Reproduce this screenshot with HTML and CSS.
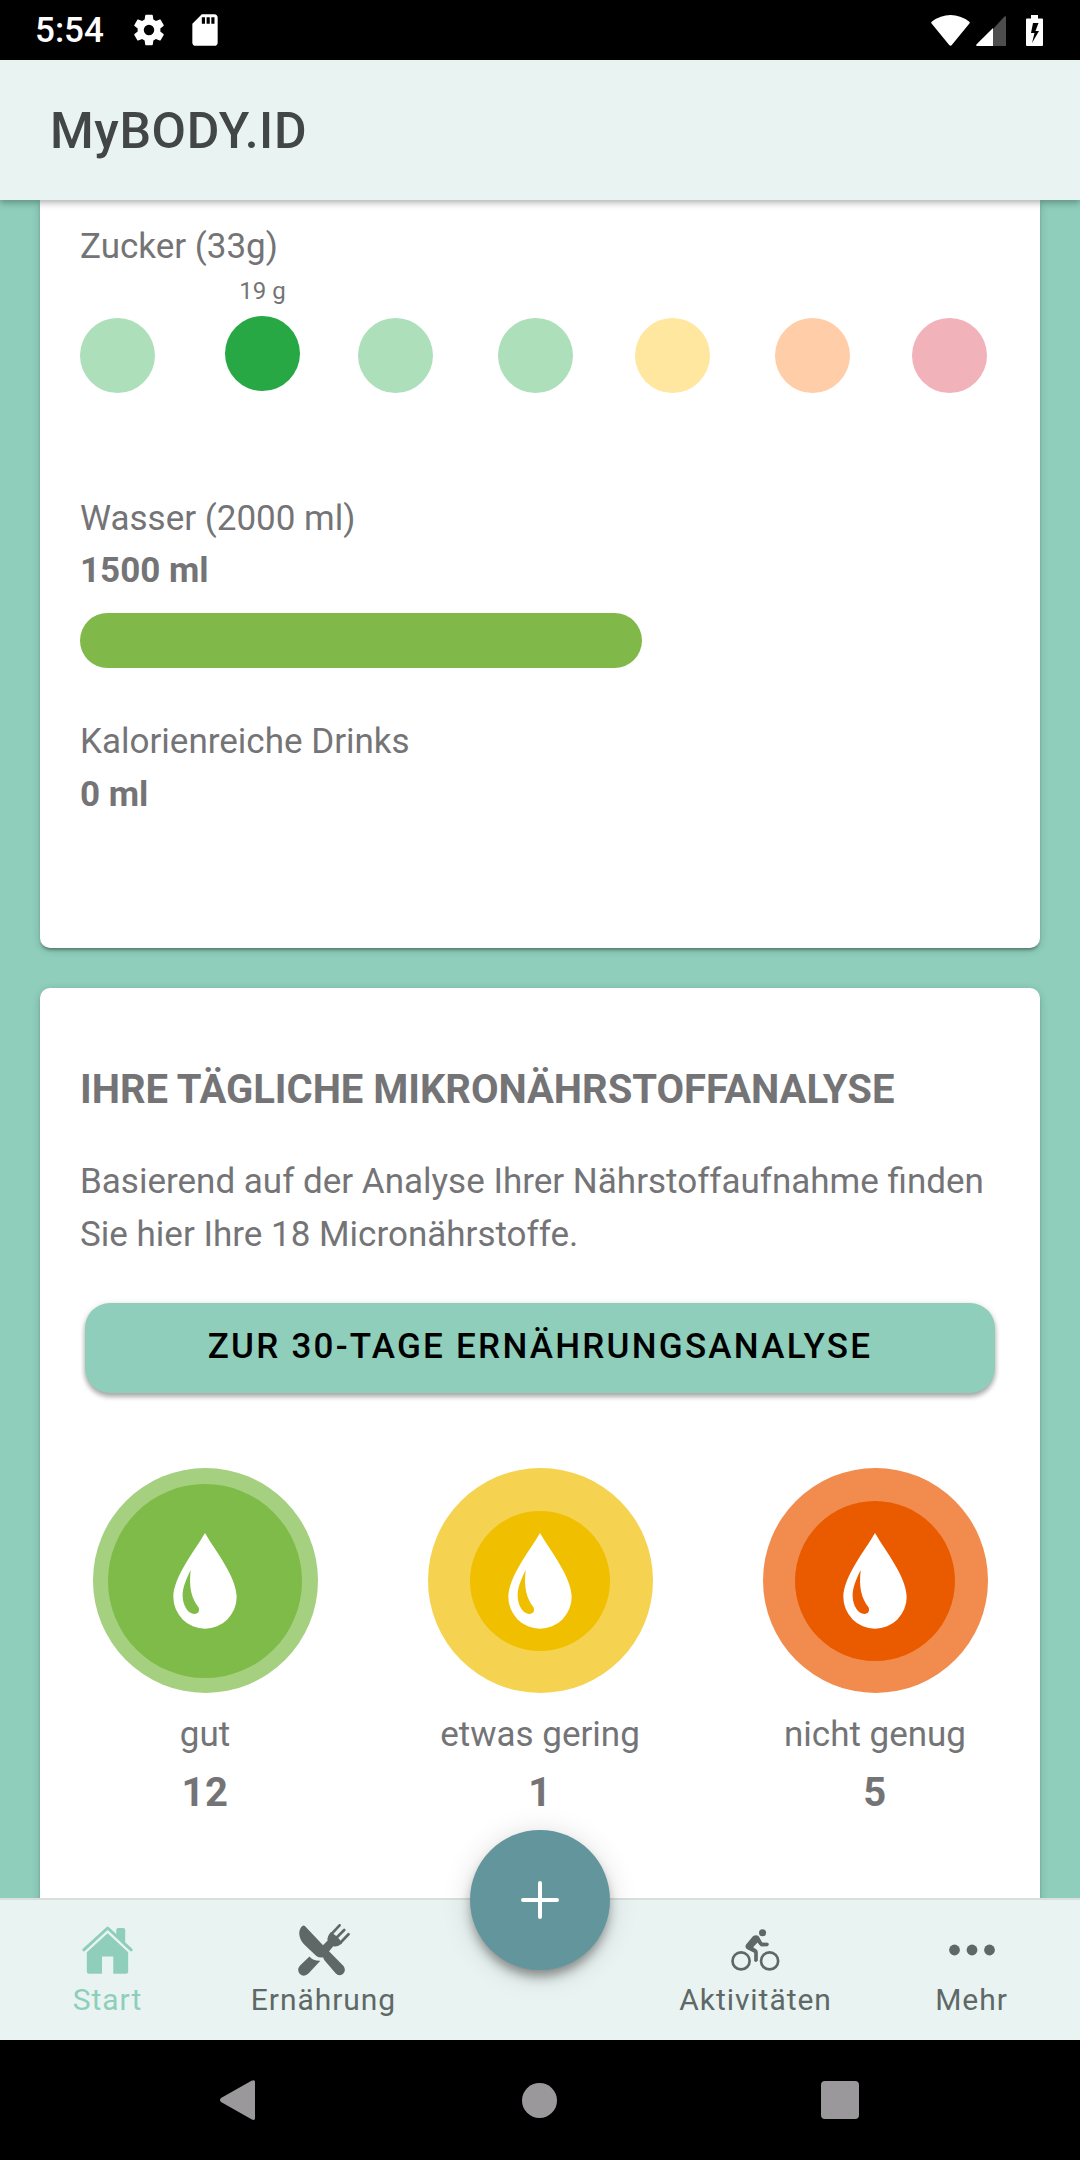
FILE: index.html
```html
<!DOCTYPE html>
<html lang="de">
<head>
    <meta charset="UTF-8">
    <meta name="viewport" content="width=device-width, initial-scale=1.0">
    <title>MyBODY.ID</title>
    <link rel="stylesheet" href="styles.css">
</head>
<body>
    <svg class="sprite" aria-hidden="true">
        <symbol id="drop" viewBox="0 0 190 288">
            <path fill-rule="evenodd" d="M95 0C125 52 190 132 190 192A95 95 0 0 1 0 192C0 132 65 52 95 0ZM52 111C38 140 27 165 28 190C29 220 45 243 63 243C76 243 80 232 75 222C55 196 46 165 52 111Z"/>
        </symbol>
    </svg>

    <div class="status-bar">
        <span class="time">5:54</span>
        <svg class="icon-gear" viewBox="0 0 24 24"><path d="M19.14 12.94c.04-.3.06-.61.06-.94 0-.32-.02-.64-.07-.94l2.03-1.58c.18-.14.23-.41.12-.61l-1.92-3.32c-.12-.22-.37-.29-.59-.22l-2.39.96c-.5-.38-1.03-.7-1.62-.94l-.36-2.54c-.04-.24-.24-.41-.48-.41h-3.84c-.24 0-.43.17-.47.41l-.36 2.54c-.59.24-1.13.57-1.62.94l-2.39-.96c-.22-.08-.47 0-.59.22L2.74 8.87c-.12.21-.08.47.12.61l2.03 1.58c-.05.3-.09.63-.09.94s.02.64.07.94l-2.03 1.58c-.18.14-.23.41-.12.61l1.92 3.32c.12.22.37.29.59.22l2.39-.96c.5.38 1.03.7 1.62.94l.36 2.54c.05.24.24.41.48.41h3.84c.24 0 .44-.17.47-.41l.36-2.54c.59-.24 1.13-.56 1.62-.94l2.39.96c.22.08.47 0 .59-.22l1.92-3.32c.12-.22.07-.47-.12-.61l-2.01-1.58zM12 15.3a3.3 3.3 0 1 1 0-6.600 3.300 3.300 0 0 1 0 6.600z"/></svg>
        <svg class="icon-sd" viewBox="0 0 24 24"><path d="M18 2h-8L4.02 8 4 20c0 1.1.9 2 2 2h12c1.1 0 2-.9 2-2V4c0-1.1-.9-2-2-2zm-6 6h-2V4h2v4zm3 0h-2V4h2v4zm3 0h-2V4h2v4z"/></svg>
        <div class="status-right">
            <svg class="icon-wifi" viewBox="0 0 39 31"><path d="M.6 8.6Q-.3 7.4 1 6.5Q9.500 0 19.500 0T38 6.500Q39.300 7.400 38.400 8.600L21 29.800Q19.500 31.500 18 29.800Z"/></svg>
            <svg class="icon-signal" viewBox="0 0 30 30"><path opacity=".3" d="M30 1V30H17V13L28.500 .5Q30 0 30 1Z"/><path d="M17 12V30H1Q-.4 29.500 .6 28.200Z"/></svg>
            <svg class="icon-battery" viewBox="0 0 17 31"><path fill-rule="evenodd" d="M5 0H12V3.500H16Q17 3.500 17 4.500V30Q17 31 16 31H1Q0 31 0 30V4.500Q0 3.500 1 3.500H5ZM7 8L5 18H8.500L6 28L13 16H9.500L12.500 8Z"/></svg>
        </div>
    </div>

    <header class="toolbar">
        <h1>MyBODY.ID</h1>
    </header>

    <main>
        <section class="card card-intake">
            <p>Zucker (33g)</p>
            <div class="dots">
                <div class="dot green"></div>
                <div class="dot-active">
                    <span>19 g</span>
                    <div class="dot"></div>
                </div>
                <div class="dot green"></div>
                <div class="dot green"></div>
                <div class="dot yellow"></div>
                <div class="dot orange"></div>
                <div class="dot red"></div>
            </div>
            <p>Wasser (2000 ml)</p>
            <p><b>1500 ml</b></p>
            <div class="bar"></div>
            <p>Kalorienreiche Drinks</p>
            <p><b>0 ml</b></p>
        </section>

        <section class="card card-micro">
            <h2>IHRE TÄGLICHE MIKRONÄHRSTOFFANALYSE</h2>
            <p class="text">Basierend auf der Analyse Ihrer Nährstoffaufnahme finden Sie hier Ihre 18 Micronährstoffe.</p>
            <button class="btn-analysis">ZUR 30-TAGE ERNÄHRUNGSANALYSE</button>
            <div class="rings">
                <div class="ring-item">
                    <div class="ring ring-good"><div class="core"><svg><use href="#drop"/></svg></div></div>
                    <span>gut</span>
                    <b>12</b>
                </div>
                <div class="ring-item">
                    <div class="ring ring-low"><div class="core"><svg><use href="#drop"/></svg></div></div>
                    <span>etwas gering</span>
                    <b>1</b>
                </div>
                <div class="ring-item">
                    <div class="ring ring-bad"><div class="core"><svg><use href="#drop"/></svg></div></div>
                    <span>nicht genug</span>
                    <b>5</b>
                </div>
            </div>
        </section>
    </main>

    <nav class="tabs">
        <a class="tab active">
            <svg class="icon-home" viewBox="0 0 153 145">
                <path d="M77 22L139 79V138Q139 144 132 144H94V92H60V144H21Q14 144 14 138V79Z"/>
                <path d="M103 12Q103 6 109 6H124Q130 6 130 12V52L103 27Z"/>
                <path class="line" stroke-width="9" d="M5 72L77 6L148 72"/>
            </svg>
            <span>Start</span>
        </a>
        <a class="tab">
            <svg class="icon-food" viewBox="0 0 156 157">
                <path d="M14 5C3 12 0 30 7 45C13 60 36 78 56 97Q63 103 76 101Q76 105 80 110L113 149Q123 160 135 151Q146 141 137 127L73 62L21 7Q17 3 14 5Z"/>
                <path d="M99 24Q86 38 89 50L72 67L91 85L106 67Q120 70 133 57L124 45L113 35Z"/>
                <path class="line" stroke-width="8" d="M101 30L125 4M111 46L139 18M126 58L152 31"/>
                <path d="M34 98Q46 112 67 111L32 149Q18 162 5 151Q-5 138 5 126Z"/>
            </svg>
            <span>Ernährung</span>
        </a>
        <div class="fab-slot">
            <button class="fab" aria-label="+">
                <svg viewBox="0 0 38 38"><path d="M19 2V36M2 19H36"/></svg>
            </button>
        </div>
        <a class="tab">
            <svg class="icon-bike" viewBox="0 0 146 125">
                <circle class="line" stroke-width="8" cx="30" cy="95" r="25.500"/>
                <circle class="line" stroke-width="8" cx="115" cy="95" r="25.500"/>
                <circle cx="94" cy="11" r="10.500"/>
                <path d="M66 21Q76 15 83 22L93 40L110 41Q116 46 109 51L90 52Q86 50 79 40L66 54L76 61Q80 64 80 70V94Q75 102 69 95V71L48 60Q40 54 45 46Z"/>
            </svg>
            <span>Aktivitäten</span>
        </a>
        <a class="tab">
            <svg class="icon-more" viewBox="0 0 46 52"><circle cx="5.500" cy="26" r="5.400"/><circle cx="23" cy="26" r="5.400"/><circle cx="40.500" cy="26" r="5.400"/></svg>
            <span>Mehr</span>
        </a>
    </nav>

    <div class="system-nav">
        <svg class="icon-back" viewBox="0 0 35 40"><path d="M1 18L31.500 .8Q35 -1 35 2V38Q35 41 31.500 39.200L1 22Q-1 20 1 18Z"/></svg>
        <div class="home-key"></div>
        <div class="recent-key"></div>
    </div>
</body>
</html>
```
FILE: styles.css
```css
* {
    box-sizing: border-box;
}

body {
    font-family: Roboto, sans-serif;
    font-size: 35px;
    line-height: 52px;
    color: #747477;
    background: #8ecebb;
    margin: 0;
    width: 1080px;
    height: 2160px;
    display: flex;
    flex-direction: column;
    overflow: hidden;
}

h1, h2, p {
    margin: 0;
}

svg {
    display: block;
    fill: currentColor;
}

.sprite {
    position: absolute;
    width: 0;
    height: 0;
}

/* status bar */
.status-bar {
    height: 60px;
    flex: none;
    display: flex;
    align-items: center;
    background: #000;
    color: #fff;
    padding: 0 37px 0 35px;
}

.time {
    width: 95px;
    padding-top: 2px;
    font-weight: 500;
}

.icon-gear, .icon-sd {
    width: 38px;
    height: 38px;
}

.icon-sd {
    margin-left: 18px;
}

.status-right {
    display: flex;
    margin-left: auto;
}

.icon-wifi {
    width: 39px;
    height: 31px;
    margin-right: 6px;
}

.icon-signal {
    width: 30px;
    height: 30px;
    margin: 1px 20px 0 0;
}

.icon-battery {
    width: 17px;
    height: 31px;
}

/* toolbar */
.toolbar {
    position: relative;
    z-index: 2;
    height: 140px;
    flex: none;
    display: flex;
    align-items: center;
    padding: 2px 0 0 50px;
    background: #e9f4f2;
    box-shadow: 0 3px 5px rgba(0, 0, 0, 0.2), 0 5px 8px rgba(0, 0, 0, 0.08);
}

.toolbar h1 {
    font-size: 50px;
    font-weight: 500;
    letter-spacing: 0.6px;
    color: #424646;
}

/* cards */
main {
    height: 1698px;
    flex: none;
    padding: 0 40px;
    overflow: hidden;
}

.card {
    background: #fff;
    border-radius: 10px;
    box-shadow: 0 3px 3px -1px rgba(0, 0, 0, 0.32), 0 2px 8px rgba(0, 0, 0, 0.16);
    padding: 0 40px;
}

.card-intake {
    height: 748px;
    border-radius: 0 0 10px 10px;
    padding-top: 21px;
}

.dots {
    display: grid;
    grid-template-columns: 145px 133px 140px 137px 140px 137px 75px;
    align-items: end;
    height: 120px;
    margin-bottom: 100px;
}

.dot {
    width: 75px;
    height: 75px;
    border-radius: 50%;
    background: #28a745;
}

.dot-active {
    width: 75px;
    margin-bottom: 2px;
    font-size: 24px;
    line-height: 35px;
    text-align: center;
}

.dot-active span {
    display: block;
    margin-bottom: 7px;
}

.green {
    background: #acdfba;
}

.yellow {
    background: #ffe79f;
}

.orange {
    background: #ffcda7;
}

.red {
    background: #f1b2ba;
}

.bar {
    width: 562px;
    height: 55px;
    margin: 16px 0 47px;
    border-radius: 28px;
    background: #80b949;
}

.bar ~ p {
    line-height: 53px;
}

.card-micro {
    height: 1000px;
    margin-top: 40px;
    padding-top: 76px;
}

.card-micro h2 {
    font-size: 40px;
    letter-spacing: -0.03px;
}

.card-micro .text {
    line-height: 53px;
    margin-top: 39px;
}

.btn-analysis {
    display: block;
    width: 910px;
    height: 90px;
    margin: 42px 0 75px 5px;
    padding: 0 0 2px;
    border: none;
    border-radius: 25px;
    background: #8ecebb;
    box-shadow: 0 4px 5px rgba(0, 0, 0, 0.28), 0 1px 6px rgba(0, 0, 0, 0.14);
    color: #000;
    font: 500 35px/52px Roboto, sans-serif;
    letter-spacing: 2.25px;
}

.rings {
    display: flex;
    justify-content: center;
    gap: 110px;
}

.ring-item {
    width: 225px;
    display: flex;
    flex-direction: column;
    align-items: center;
    white-space: nowrap;
}

.ring-item span {
    margin-top: 16px;
}

.ring-item b {
    margin-top: 2px;
    font-size: 40px;
    line-height: 60px;
    letter-spacing: 0.5px;
}

.ring, .core {
    display: flex;
    align-items: center;
    justify-content: center;
    border-radius: 50%;
}

.ring {
    width: 225px;
    height: 225px;
}

.ring svg {
    width: 64px;
    height: 96px;
    fill: #fff;
}

.ring-good {
    background: #a5d080;
}

.ring-good .core {
    width: 194px;
    height: 194px;
    background: #7fbb48;
}

.ring-low {
    background: #f5d250;
}

.ring-low .core {
    width: 140px;
    height: 140px;
    background: #efbf00;
}

.ring-bad {
    background: #f18c4e;
}

.ring-bad .core {
    width: 160px;
    height: 160px;
    background: #ea5b00;
}

/* bottom tabs */
.tabs {
    position: relative;
    z-index: 2;
    height: 142px;
    flex: none;
    display: grid;
    grid-template-columns: repeat(5, 216px);
    background: #e9f4f2;
    border-top: 2px solid #d8dfdd;
    color: #606867;
    font-size: 30px;
    line-height: 36px;
    letter-spacing: 0.95px;
}

.tab {
    display: flex;
    flex-direction: column;
    align-items: center;
    padding: 24px 1px 0 0;
}

.tab.active {
    color: #8ecebb;
}

.tab span {
    margin-top: auto;
    margin-bottom: 22px;
}

.line {
    fill: none;
    stroke: currentColor;
    stroke-linecap: round;
    stroke-linejoin: round;
}

.icon-home {
    width: 51px;
    height: 48px;
    margin-top: 2px;
}

.icon-food {
    width: 52px;
    height: 52px;
}

.icon-bike {
    width: 49px;
    height: 42px;
    margin-top: 5px;
}

.icon-more {
    width: 46px;
    height: 52px;
}

.fab-slot {
    display: flex;
    justify-content: center;
}

.fab {
    width: 140px;
    height: 140px;
    margin-top: -70px;
    padding: 0;
    display: flex;
    align-items: center;
    justify-content: center;
    border: none;
    border-radius: 50%;
    background: #63959c;
    box-shadow: 0 8px 12px -2px rgba(0, 0, 0, 0.4), 0 4px 30px rgba(0, 0, 0, 0.14);
}

.fab svg {
    width: 38px;
    height: 38px;
    fill: none;
    stroke: #fff;
    stroke-width: 4;
    stroke-linecap: round;
}

/* system navigation */
.system-nav {
    height: 120px;
    flex: none;
    display: flex;
    align-items: center;
    justify-content: space-between;
    padding: 0 221px 0 220px;
    background: #000;
    color: #9a989b;
}

.icon-back {
    width: 35px;
    height: 40px;
}

.home-key {
    width: 35px;
    height: 35px;
    margin-left: 2px;
    border-radius: 50%;
    background: currentColor;
}

.recent-key {
    width: 38px;
    height: 38px;
    border-radius: 4px;
    background: currentColor;
}
```
